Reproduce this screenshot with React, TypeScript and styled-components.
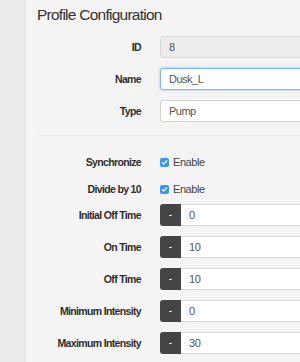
import React from "react";
import styled, { createGlobalStyle, css } from "styled-components";

const Global = createGlobalStyle`
  html, body { margin: 0; padding: 0; }
  body {
    width: 300px;
    height: 362px;
    overflow: hidden;
    background: #f4f4f4;
    font-family: "Liberation Sans", Arial, Helvetica, sans-serif;
    color: #333;
  }
`;

const Page = styled.div`
  display: flex;
  width: 300px;
  height: 362px;
  overflow: hidden;
`;

const Sidebar = styled.div`
  flex: 0 0 25px;
  background: #ebebeb;
  border-right: 1px solid #e2e2e2;
`;

const Main = styled.div`
  flex: 1;
  min-width: 0;
  background: #f4f4f4;
  padding-left: 11px;
  overflow: hidden;
`;

const Title = styled.h3`
  margin: 0;
  height: 36px;
  padding-top: 5px;
  box-sizing: border-box;
  font-size: 15.5px;
  letter-spacing: -0.75px;
  font-weight: normal;
  color: #333;
  line-height: 20px;
  white-space: nowrap;
`;

const Row = styled.div<{ $h?: number; $gap?: number }>`
  display: grid;
  grid-template-columns: 104px 400px;
  column-gap: 19px;
  align-items: center;
  height: ${(p) => p.$h ?? 22}px;
  margin-bottom: ${(p) => p.$gap ?? 10}px;
`;

const Label = styled.label`
  text-align: right;
  font-size: 10.5px;
  letter-spacing: -0.65px;
  font-weight: bold;
  color: #2e2e2e;
  white-space: nowrap;
`;

const TextInput = styled.div<{ $variant?: "disabled" | "focus" }>`
  height: 22px;
  box-sizing: border-box;
  border: 1px solid #d2d2d2;
  border-radius: 3px;
  background: #fff;
  padding-left: 8px;
  display: flex;
  align-items: center;
  font-size: 11px;
  letter-spacing: -0.5px;
  color: #555;
  ${(p) =>
    p.$variant === "disabled" &&
    css`
      background: #ececec;
      border-color: #dadada;
    `}
  ${(p) =>
    p.$variant === "focus" &&
    css`
      border-color: #7bb8ec;
      box-shadow: 0 0 3px rgba(102, 175, 233, 0.7);
    `}
`;

const Divider = styled.div`
  height: 1px;
  background: #ededed;
  margin: 13px 0 17px 0;
`;

const CheckWrap = styled.div`
  display: flex;
  align-items: center;
  gap: 4px;
  font-size: 11px;
  letter-spacing: -0.45px;
  color: #444;
`;

const Box = styled.span`
  width: 9px;
  height: 9px;
  border-radius: 2px;
  background: #3a95f5;
  display: inline-flex;
  align-items: center;
  justify-content: center;
`;

const Group = styled.div`
  display: flex;
  height: 22px;
`;

const Minus = styled.button`
  width: 21px;
  height: 22px;
  border: none;
  padding: 0;
  border-radius: 3px 0 0 3px;
  background: #454545;
  color: #fff;
  font-family: inherit;
  font-size: 10px;
  line-height: 22px;
`;

const NumField = styled.div`
  flex: 1;
  height: 22px;
  box-sizing: border-box;
  border: 1px solid #dadada;
  border-left: none;
  background: #fff;
  padding-left: 8px;
  display: flex;
  align-items: center;
  font-size: 11px;
  letter-spacing: -0.4px;
  color: #555;
`;

const Check = () => (
  <Box>
    <svg width="7" height="7" viewBox="0 0 8 8">
      <path d="M1.5 4.2 L3.2 5.8 L6.5 2" fill="none" stroke="#fff" strokeWidth="1.4" strokeLinecap="round" strokeLinejoin="round" />
    </svg>
  </Box>
);

const numbers = [
  { label: "Initial Off Time", value: "0" },
  { label: "On Time", value: "10" },
  { label: "Off Time", value: "10" },
  { label: "Minimum Intensity", value: "0" },
  { label: "Maximum Intensity", value: "30" },
];

export default function App() {
  return (
    <>
      <Global />
      <Page>
        <Sidebar />
        <Main>
          <Title>Profile Configuration</Title>
          <Row>
            <Label>ID</Label>
            <TextInput $variant="disabled">8</TextInput>
          </Row>
          <Row>
            <Label>Name</Label>
            <TextInput $variant="focus">Dusk_L</TextInput>
          </Row>
          <Row $gap={0}>
            <Label>Type</Label>
            <TextInput>Pump</TextInput>
          </Row>
          <Divider />
          <Row $h={18} $gap={9}>
            <Label>Synchronize</Label>
            <CheckWrap>
              <Check />
              Enable
            </CheckWrap>
          </Row>
          <Row $h={18} $gap={6}>
            <Label>Divide by 10</Label>
            <CheckWrap>
              <Check />
              Enable
            </CheckWrap>
          </Row>
          {numbers.map((n) => (
            <Row key={n.label}>
              <Label>{n.label}</Label>
              <Group>
                <Minus>-</Minus>
                <NumField>{n.value}</NumField>
              </Group>
            </Row>
          ))}
        </Main>
      </Page>
    </>
  );
}
